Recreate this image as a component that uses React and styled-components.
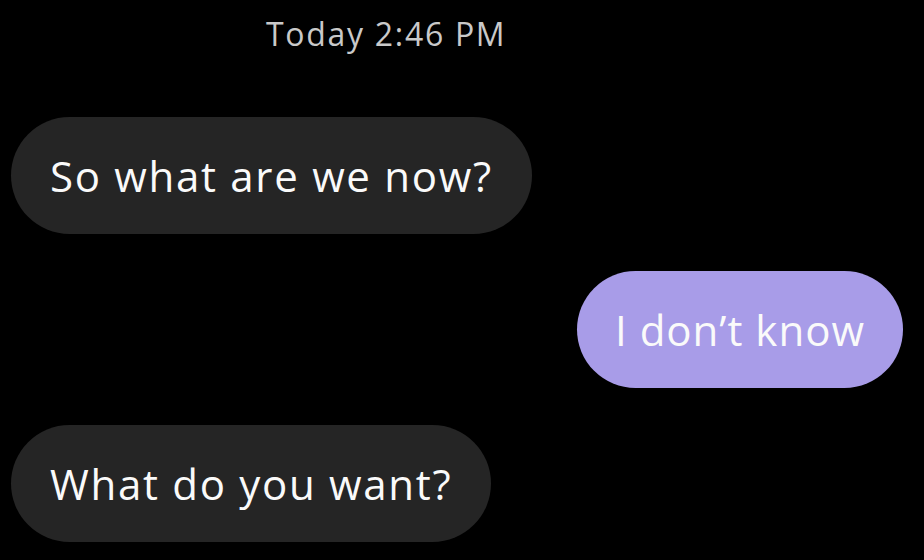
import React from "react";
import styled, { createGlobalStyle } from "styled-components";

const Global = createGlobalStyle`
  html, body { margin: 0; padding: 0; background: #000; }
  body { width: 924px; height: 560px; overflow: hidden; font-family: "Open Sans", "Noto Sans", sans-serif; }
`;

const Screen = styled.div`
  width: 924px;
  height: 560px;
  background: #000;
  display: flex;
  flex-direction: column;
  box-sizing: border-box;
  padding: 8px 21px 0 11px;
`;

const Stamp = styled.div`
  margin-left: 255px;
  height: 50px;
  display: flex;
  align-items: center;
  color: #c9c9c9;
  font-size: 32px;
  letter-spacing: 1.7px;
`;

const Thread = styled.div`
  display: flex;
  flex-direction: column;
  gap: 37px;
  margin-top: 59px;
`;

const Row = styled.div`
  display: flex;
  justify-content: ${(p) => (p.$mine ? "flex-end" : "flex-start")};
`;

const Bubble = styled.div`
  height: 117px;
  box-sizing: border-box;
  display: flex;
  align-items: center;
  padding: 0 ${(p) => (p.$mine ? "38px" : "39px")};
  border-radius: 59px;
  background: ${(p) => (p.$mine ? "#a89ce8" : "#252525")};
  color: #fafafa;
  font-size: 42px;
  letter-spacing: ${(p) => (p.$mine ? "1px" : "1.7px")};
  white-space: nowrap;
`;

const messages = [
  { text: "So what are we now?", mine: false },
  { text: "I don’t know", mine: true },
  { text: "What do you want?", mine: false },
];

export default function App() {
  return (
    <>
      <Global />
      <Screen>
        <Stamp>Today 2:46 PM</Stamp>
        <Thread>
          {messages.map((m, i) => (
            <Row key={i} $mine={m.mine}>
              <Bubble $mine={m.mine}>{m.text}</Bubble>
            </Row>
          ))}
        </Thread>
      </Screen>
    </>
  );
}
